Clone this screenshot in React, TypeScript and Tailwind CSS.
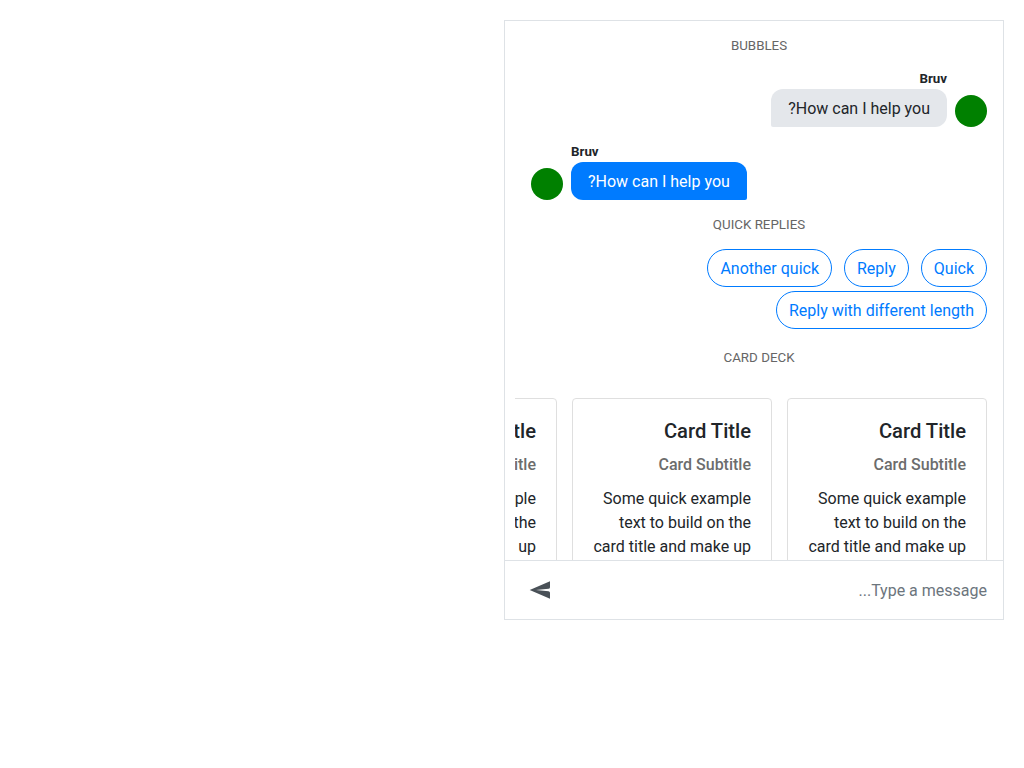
import React from "react";

function SectionTitle({ children }: { children: React.ReactNode }) {
  return (
    <div className="h-[19px] text-center text-[13.33px] leading-[19px] text-[#666666] uppercase">
      {children}
    </div>
  );
}

function Message({ own = false }: { own?: boolean }) {
  return (
    <div className={own ? "flex flex-row-reverse items-end gap-2" : "flex items-end gap-2"}>
      <div className="size-8 rounded-full bg-[#008000]" />
      <div className={own ? "text-left" : "text-right"}>
        <div className="mb-px h-[19px] text-[13.33px] leading-[19px] font-bold">Bruv</div>
        <div
          className={
            own
              ? "rounded-[12px] rounded-br-[2px] bg-[#007bff] px-[17px] pt-2 pb-1.5 leading-6 text-white"
              : "rounded-[12px] rounded-bl-[2px] bg-[#e4e7eb] px-[17px] pt-2 pb-1.5 leading-6"
          }
        >
          How can I help you?
        </div>
      </div>
    </div>
  );
}

function Card() {
  return (
    <div className="h-[280px] w-[200px] shrink-0 rounded-[4px] border border-[#dfdfdf] p-5">
      <h5 className="mb-3 text-[20.2px] leading-6 font-medium">Card Title</h5>
      <h6 className="mb-[13px] text-base leading-[19px] font-medium text-[#6c6c6c]">Card Subtitle</h6>
      <p className="leading-6">
        Some quick example text to build on the card title and make up the bulk of the card's content.
      </p>
    </div>
  );
}

const replies = ["Quick", "Reply", "Another quick", "Reply with different length"];

export default function App() {
  return (
    <div
      dir="rtl"
      className="h-[768px] overflow-hidden bg-white p-5 font-['Roboto',sans-serif] text-base text-[#212529]"
    >
      <div className="flex h-[600px] w-[500px] flex-col border border-[#dee2e6]">
        <div className="ml-[10px] min-h-0 flex-1 overflow-hidden pt-[15px]">
          <div className="px-4">
            <SectionTitle>Bubbles</SectionTitle>
            <div className="mt-[14px] flex flex-col gap-[15px]">
              <Message />
              <Message own />
            </div>
            <div className="mt-[15px]">
              <SectionTitle>Quick Replies</SectionTitle>
            </div>
            <div className="mt-[15px] flex flex-wrap gap-x-3 gap-y-1">
              {replies.map((r) => (
                <button
                  key={r}
                  className="h-[38px] rounded-full border border-[#007bff] px-3 pt-0.5 leading-6 text-[#007bff]"
                >
                  {r}
                </button>
              ))}
            </div>
            <div className="mt-[19px]">
              <SectionTitle>Card Deck</SectionTitle>
            </div>
          </div>
          <div className="mt-[31px] flex gap-[15px] overflow-hidden pr-4">
            <Card />
            <Card />
            <Card />
          </div>
        </div>
        <div className="flex h-[59px] shrink-0 items-center justify-between border-t border-[#dee2e6] pr-4 pl-[23px]">
          <span className="pt-0.5 text-[#6c757d]">Type a message...</span>
          <svg viewBox="0 0 24 24" className="size-6 fill-[#495057]">
            <path d="M1.7 12 22 3.2 22 9.2Q21.9 10.8 20.5 10.8L8 12 20.5 13.2Q21.9 13.3 22 14.8L22 20.8Z" />
          </svg>
        </div>
      </div>
    </div>
  );
}
